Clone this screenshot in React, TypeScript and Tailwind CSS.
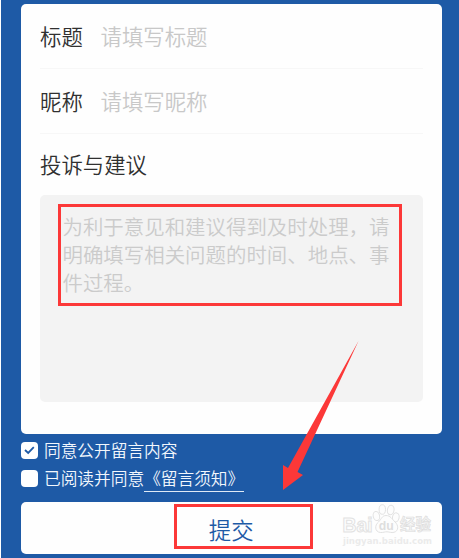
import React from "react";

const CJK = "font-['Noto_Sans_CJK_SC',sans-serif]";

function Field({ label, placeholder, height }: { label: string; placeholder: string; height: string }) {
  return (
    <div className={`flex items-center border-b border-[#f7f7f7] text-[21.4px] leading-[30px] ${height}`}>
      <span className="w-[60.5px] shrink-0 text-[#303030]">{label}</span>
      <span className="text-[#c8c8c8]">{placeholder}</span>
    </div>
  );
}

function Checkbox({ checked }: { checked?: boolean }) {
  return (
    <span className="flex h-[17px] w-[17px] shrink-0 items-center justify-center rounded-[4px] bg-white">
      {checked && (
        <svg width="11" height="9" viewBox="0 0 11 9" fill="none" stroke="#1e5aa6" strokeWidth="1.8">
          <path d="M1 4 L4.2 7 L9.8 1.2" />
        </svg>
      )}
    </span>
  );
}

function Watermark() {
  return (
    <svg className="absolute left-[340px] top-[502px]" width="96" height="48" viewBox="0 0 96 48">
      <g fill="#fdfdfd" stroke="#e2e2e2" strokeWidth="1">
        <text x="1.5" y="29.7" fontSize="19.5" fontWeight="700" textLength="30" lengthAdjust="spacingAndGlyphs" fontFamily="Liberation Sans, sans-serif">Bai</text>
        <ellipse cx="35.4" cy="14" rx="3.2" ry="4.6" transform="rotate(-12 35.4 14)" />
        <ellipse cx="41.3" cy="7.5" rx="3.2" ry="4.8" />
        <ellipse cx="49.7" cy="8" rx="3.3" ry="4.8" transform="rotate(10 49.7 8)" />
        <ellipse cx="54.8" cy="15.4" rx="3.3" ry="4.6" transform="rotate(12 54.8 15.4)" />
        <path d="M45 13.5 C41 13.5 40.5 17 37.5 20 C33.5 23 33.5 30 39.5 30.5 C42.5 30.7 43.5 29.7 46 29.8 C49 30 50 31 53 30.3 C58 29 57.5 23 54 20 C51 17 49.5 13.5 45 13.5 Z" />
      </g>
      <text x="37.8" y="28" fontSize="13.5" fontWeight="700" fill="#dedede" textLength="15" lengthAdjust="spacingAndGlyphs" fontFamily="Liberation Sans, sans-serif">du</text>
      <text x="59" y="28.4" fontSize="15.5" fontWeight="700" fill="#f4f4f4" stroke="#dedede" strokeWidth="0.7" textLength="31" lengthAdjust="spacingAndGlyphs" fontFamily="Noto Sans CJK SC, sans-serif">经验</text>
      <text x="2" y="42" fontSize="9" fontWeight="700" fill="#ebebeb" textLength="89" lengthAdjust="spacingAndGlyphs" fontFamily="DejaVu Sans, sans-serif">jingyan.baidu.com</text>
    </svg>
  );
}

export default function App() {
  return (
    <main className={`relative h-[558px] w-[459px] overflow-hidden border-l border-white bg-[#1e5aa6] pl-[19.5px] pt-[4.3px] font-[350] ${CJK}`}>
      <section className="h-[429.4px] w-[421.5px] rounded-[5px] bg-[#fefefe] px-[19.5px]">
        <Field label="标题" placeholder="请填写标题" height="h-[65px]" />
        <Field label="昵称" placeholder="请填写昵称" height="h-[64.5px]" />
        <h2 className="flex h-[61.5px] items-center pb-[2px] text-[21.4px] font-[350] leading-[30px] text-[#303030]">投诉与建议</h2>
        <div className="h-[206.5px] w-[382.5px] rounded-[5px] bg-[#f3f3f3] pl-[22.5px] pt-[17px] text-[20.45px] leading-[28px] text-[#cbcbcb]">
          <p className="whitespace-nowrap">为利于意见和建议得到及时处理，请<br />明确填写相关问题的时间、地点、事<br />件过程。</p>
        </div>
      </section>

      <div className="pt-[3.5px] text-[16.7px] leading-[27.5px] text-[#f2f7fd]">
        <label className="flex h-[27.5px] items-center gap-[6.5px]">
          <Checkbox checked />
          <span className="pb-px">同意公开留言内容</span>
        </label>
        <label className="flex h-[27.5px] items-center gap-[6.5px]">
          <Checkbox />
          <span className="flex">已阅读并同意<span className="h-[27px] border-b border-[#dfeaf6]">《留言须知》</span></span>
        </label>
      </div>

      <button className="mt-[10.3px] flex h-[52px] w-[421.5px] items-center justify-center rounded-[5px] bg-[#fefefe] pt-[2px] text-[22.4px] leading-[32px] text-[#1e5aa6]">
        提交
      </button>

      <Watermark />
      <div className="absolute left-[57px] top-[204px] h-[102px] w-[344px] border-[3px] border-[#fc3838]" />
      <div className="absolute left-[173px] top-[504px] h-[45px] w-[139px] border-[3px] border-[#fc3838]" />
      <svg className="absolute left-[281px] top-[340px]" width="78" height="152" viewBox="282 340 78 152">
        <path d="M358.5 341 L297.5 472 L303 475 L283 490 L283 465 L288 468 Z" fill="#fc3838" />
      </svg>
    </main>
  );
}
